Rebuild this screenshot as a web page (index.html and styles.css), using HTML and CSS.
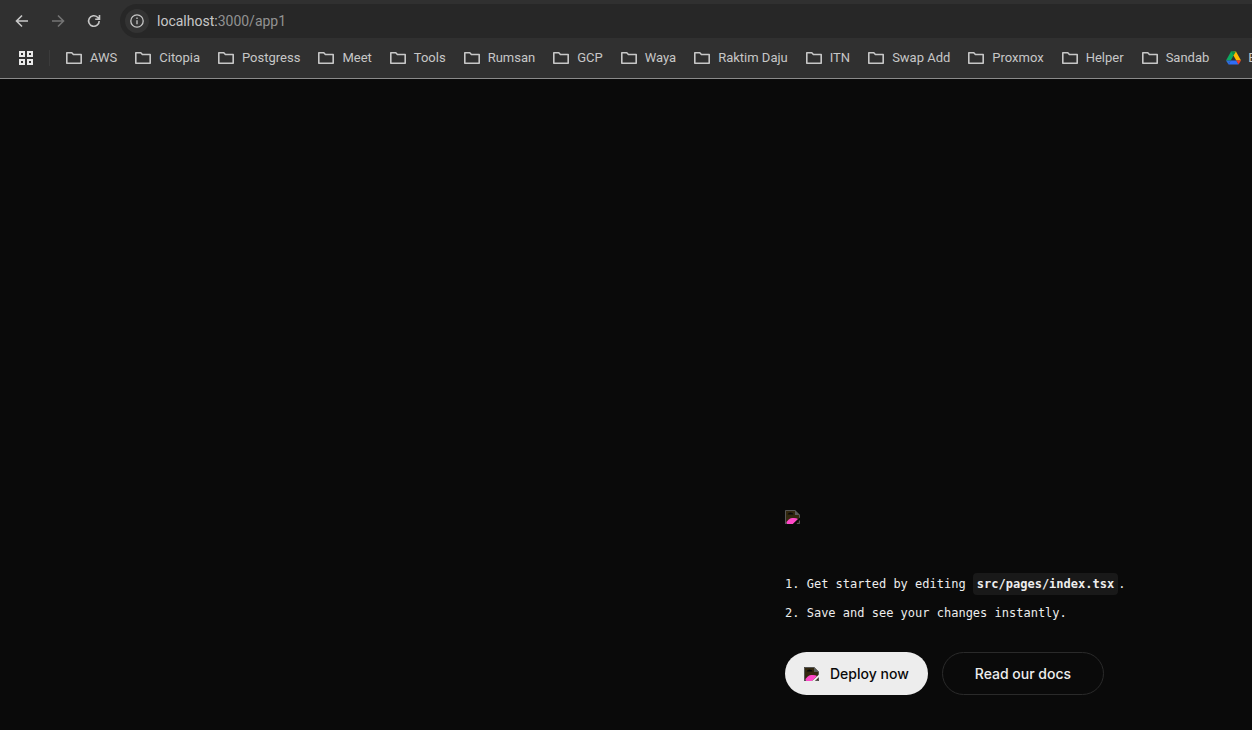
FILE: index.html
```
<!DOCTYPE html>
<html lang="en">
<head>
<meta charset="utf-8">
<meta name="viewport" content="width=device-width, initial-scale=1">
<title>localhost:3000/app1</title>
<link rel="stylesheet" href="styles.css">
</head>
<body>
<svg class="sprite" aria-hidden="true">
  <symbol id="folder" viewBox="0 0 18 14"><path d="M1.8 1.8H6.8L8.4 3.5H16.2V12.2H1.8Z" fill="none" stroke="currentColor" stroke-width="1.6" stroke-linejoin="round"/></symbol>
  <symbol id="broken" viewBox="0 0 16 16">
    <path d="M0 1H10L15 6V15H0Z" fill="#33280f"/>
    <path d="M2.5 5.5Q3.5 3.5 5.5 3.5Q8 3.5 8.5 5.5Z" fill="#080808"/>
    <path d="M1 14.5Q3 9.500 7 9Q11 8.500 13 10L8 15H1Z" fill="#ff48c8"/>
    <path d="M.5 15V1.5H10M14.5 6V9M0 14.5H2M12 14.5H14.5V11" fill="none" stroke="#555" stroke-width="1"/>
    <path d="M10 1L15 6H10Z" fill="#5a5a5a"/>
    <path d="M8 15L15 8.5V11L11 15Z" fill="var(--surface)"/>
  </symbol>
</svg>
<header class="browser">
  <div class="toolbar">
    <button class="tool" aria-label="Back"><svg viewBox="0 0 16 16"><path d="M14 8H3M8 2.5L2.5 8L8 13.5"/></svg></button>
    <button class="tool tool-off" aria-label="Forward" disabled><svg viewBox="0 0 16 16"><path d="M2 8H13M8 2.5L13.5 8L8 13.5"/></svg></button>
    <button class="tool" aria-label="Reload"><svg viewBox="0 0 16 16"><path d="M13.2 8A5.3 5.3 0 1 1 11.6 4.2L13.4 6M13.5 2V6.3H9.2"/></svg></button>
    <div class="address">
      <button class="site-info" aria-label="Site information"><svg viewBox="0 0 16 16"><circle cx="8" cy="8" r="6.2"/><path d="M8 7.2V11.3M8 4.6V6"/></svg></button>
      <a class="url" href="#">localhost:<span>3000/app1</span></a>
    </div>
  </div>
  <nav class="bookmarks" aria-label="Bookmarks">
    <button class="apps" aria-label="Apps"><svg viewBox="0 0 14 14"><path d="M1 1H5V5H1ZM9 1H13V5H9ZM1 9H5V13H1ZM9 9H13V13H9Z"/></svg></button>
    <a class="bookmark" href="#"><svg><use href="#folder"/></svg>AWS</a>
    <a class="bookmark" href="#"><svg><use href="#folder"/></svg>Citopia</a>
    <a class="bookmark" href="#"><svg><use href="#folder"/></svg>Postgress</a>
    <a class="bookmark" href="#"><svg><use href="#folder"/></svg>Meet</a>
    <a class="bookmark" href="#"><svg><use href="#folder"/></svg>Tools</a>
    <a class="bookmark" href="#"><svg><use href="#folder"/></svg>Rumsan</a>
    <a class="bookmark" href="#"><svg><use href="#folder"/></svg>GCP</a>
    <a class="bookmark" href="#"><svg><use href="#folder"/></svg>Waya</a>
    <a class="bookmark" href="#"><svg><use href="#folder"/></svg>Raktim Daju</a>
    <a class="bookmark" href="#"><svg><use href="#folder"/></svg>ITN</a>
    <a class="bookmark" href="#"><svg><use href="#folder"/></svg>Swap Add</a>
    <a class="bookmark" href="#"><svg><use href="#folder"/></svg>Proxmox</a>
    <a class="bookmark" href="#"><svg><use href="#folder"/></svg>Helper</a>
    <a class="bookmark" href="#"><svg><use href="#folder"/></svg>Sandab</a>
    <a class="bookmark" href="#"><svg class="drive" viewBox="0 0 15 14"><path d="M5 .5H7.500L7.500 4.500L4.700 9.500H0Z" fill="#0da960"/><path d="M7.500 .5H10L15 9.500H10.300L7.500 4.500Z" fill="#ffba00"/><path d="M5 .5H10L7.500 4.500Z" fill="#0b8f48"/><path d="M0 9.500H4.700L2.500 13.500Z" fill="#2d6fdd"/><path d="M4.700 9.500H10.300L12.500 13.500H2.500Z" fill="#2f6df6"/><path d="M10.300 9.500H15L12.500 13.500Z" fill="#f03a2d"/></svg>E</a>
  </nav>
</header>
<main class="page">
  <section class="content">
    <svg class="broken" role="img" aria-label="Logo"><use href="#broken"/></svg>
    <ol class="steps">
      <li>Get started by editing <code>src/pages/index.tsx</code>.</li>
      <li>Save and see your changes instantly.</li>
    </ol>
    <div class="actions">
      <a class="cta primary" href="#"><svg class="broken" aria-hidden="true"><use href="#broken"/></svg>Deploy now</a>
      <a class="cta secondary" href="#">Read our docs</a>
    </div>
  </section>
</main>
</body>
</html>
```
FILE: styles.css
```
* { box-sizing: border-box; }
body {
  margin: 0;
  min-height: 100vh;
  display: flex;
  flex-direction: column;
  overflow: hidden;
  background: #0a0a0a;
  color: #ededed;
  font-family: Inter, "Liberation Sans", sans-serif;
}
a { color: inherit; text-decoration: none; }
button { padding: 0; border: 0; background: none; color: inherit; }
.sprite { position: absolute; width: 0; height: 0; }

.browser {
  flex: none;
  padding-top: 4px;
  background: #303030;
  border-bottom: 1px solid #8a8a8a;
  color: #c7c7c7;
  font-family: Roboto, "Noto Sans", sans-serif;
}
.toolbar { display: flex; align-items: center; padding-left: 4px; }
.tool { width: 36px; height: 34px; display: grid; place-items: center; }
.tool svg, .site-info svg {
  width: 16px;
  height: 16px;
  fill: none;
  stroke: currentColor;
  stroke-width: 1.6;
}
.tool-off { color: #747474; }
.address {
  flex: 1;
  height: 34px;
  margin-left: 8px;
  padding-left: 5px;
  display: flex;
  align-items: center;
  gap: 8px;
  border-radius: 17px 0 0 17px;
  background: #272727;
}
.site-info {
  width: 24px;
  height: 24px;
  display: grid;
  place-items: center;
  border-radius: 50%;
  background: #333;
}
.site-info svg { stroke-width: 1.3; }
.url { font-size: 14px; }
.url span { color: #929292; }
.bookmarks {
  height: 40px;
  padding-left: 19px;
  display: flex;
  align-items: center;
  gap: 17px;
  white-space: nowrap;
  font-size: 13px;
  line-height: 16px;
}
.apps {
  height: 16px;
  padding-right: 16px;
  margin-right: -2px;
  display: flex;
  align-items: center;
  border-right: 1px solid #3b3b3b;
  color: #e8e8e8;
}
.apps svg { width: 14px; height: 14px; fill: none; stroke: currentColor; stroke-width: 2; }
.bookmark { flex: none; display: flex; align-items: center; gap: 7px; }
.bookmark svg { width: 18px; height: 14px; }
.bookmark .drive { width: 15px; }

.page {
  --surface: #0a0a0a;
  flex: 1;
  display: flex;
  align-items: flex-end;
  padding: 0 118px 35px;
}
.content { width: 349px; margin-left: auto; }
.broken { display: block; width: 16px; height: 16px; }
.steps {
  margin: 49px 0 28px;
  padding: 0;
  list-style: none;
  counter-reset: step;
  font: 12px/21px "DejaVu Sans Mono", "Liberation Mono", monospace;
  white-space: nowrap;
}
.steps li { counter-increment: step; margin-bottom: 8px; }
.steps li::before { content: counter(step) ". "; }
.steps code {
  padding: 4px;
  border-radius: 4px;
  background: #191919;
  font: inherit;
  font-weight: 700;
}
.actions { display: flex; gap: 14px; white-space: nowrap; }
.cta {
  height: 43px;
  display: flex;
  align-items: center;
  justify-content: center;
  border: 1px solid transparent;
  border-radius: 22px;
  font-size: 14px;
  font-weight: 500;
}
.primary {
  --surface: #ededed;
  gap: 10px;
  padding: 0 18px;
  background: #ededed;
  color: #0a0a0a;
}
.secondary { padding: 0 32px; border-color: #2a2a2a; }
```
